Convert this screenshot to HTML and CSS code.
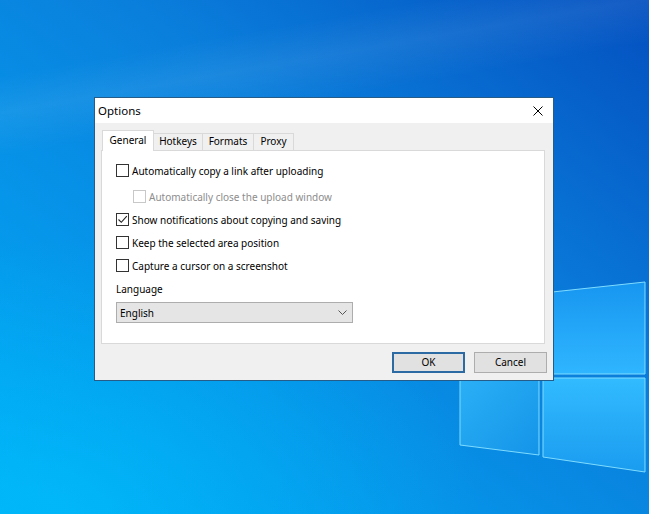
FILE: index.html
```html
<!DOCTYPE html>
<html>
<head>
  <title>Options</title>
  <meta charset="utf-8">
  <link rel="stylesheet" href="styles.css">
</head>
<body>
  <div class="desktop">
    <svg class="wallpaper" width="649" height="514" viewBox="0 0 649 514">
      <defs>
        <linearGradient id="pane-top" x1="0" y1="0" x2="0" y2="1">
          <stop offset="0" stop-color="#1796f0"/>
          <stop offset="1" stop-color="#2fb6ff"/>
        </linearGradient>
        <linearGradient id="pane-bl" x1="0" y1="0" x2="1" y2="1">
          <stop offset="0" stop-color="#2bb0f6"/>
          <stop offset="1" stop-color="#1494e8"/>
        </linearGradient>
        <linearGradient id="pane-br" x1="0" y1="0" x2="0" y2="1">
          <stop offset="0" stop-color="#32bbff"/>
          <stop offset="1" stop-color="#1a9cef"/>
        </linearGradient>
      </defs>
      <!-- windows logo panes -->
      <polygon points="460,305 539,294 539,374 460,374" fill="url(#pane-top)" stroke="#7edcff" stroke-width="1"/>
      <polygon points="543,293 645,282 645,374 543,374" fill="url(#pane-top)" stroke="#7edcff" stroke-width="1"/>
      <polygon points="460,378 539,378 539,455 460,445" fill="url(#pane-bl)" stroke="#7edcff" stroke-width="1"/>
      <polygon points="543,378 645,378 645,472 543,457" fill="url(#pane-br)" stroke="#7edcff" stroke-width="1"/>
    </svg>

    <div class="window">
      <div class="titlebar">
        <span class="title">Options</span>
        <svg class="close" width="10" height="10" viewBox="0 0 10 10">
          <path d="M0.5 0.5 L9.5 9.5 M9.5 0.5 L0.5 9.5" stroke="#000" stroke-width="1" fill="none"/>
        </svg>
      </div>

      <div class="window-body">
        <div class="tabs">
          <div class="tab tab-general active">General</div>
          <div class="tab tab-hotkeys">Hotkeys</div>
          <div class="tab tab-formats">Formats</div>
          <div class="tab tab-proxy">Proxy</div>
        </div>

        <div class="tab-panel">
          <div class="option">
            <span class="box"></span>
            <span>Automatically copy a link after uploading</span>
          </div>
          <div class="option sub disabled">
            <span class="box"></span>
            <span>Automatically close the upload window</span>
          </div>
          <div class="option">
            <span class="box">
              <svg width="11" height="11" viewBox="0 0 11 11">
                <path d="M1.5 5.5 L4.3 8.3 L9.8 2.2" stroke="#222" stroke-width="1.1" fill="none"/>
              </svg>
            </span>
            <span>Show notifications about copying and saving</span>
          </div>
          <div class="option">
            <span class="box"></span>
            <span>Keep the selected area position</span>
          </div>
          <div class="option">
            <span class="box"></span>
            <span>Capture a cursor on a screenshot</span>
          </div>

          <div class="field-label">Language</div>
          <div class="combo">
            <span>English</span>
            <svg width="9" height="5" viewBox="0 0 9 5">
              <path d="M0.5 0.5 L4.5 4.5 L8.5 0.5" stroke="#555" stroke-width="1" fill="none"/>
            </svg>
          </div>
        </div>

        <div class="buttons">
          <div class="btn default">OK</div>
          <div class="btn">Cancel</div>
        </div>
      </div>
    </div>
  </div>
</body>
</html>
```

FILE: styles.css
```css
body {
  margin: 0;
  font-family: 'Noto Sans', 'Segoe UI', sans-serif;
  font-size: 10px;
  color: #000;
  overflow: hidden;
}

.desktop {
  position: relative;
  width: 649px;
  height: 514px;
  box-sizing: border-box;
  padding: 97px 0 0 94px;
  background:
    linear-gradient(170deg, transparent 12%, rgba(255, 255, 255, 0.07) 18%, transparent 25%),
    radial-gradient(ellipse 420px 260px at 60px 500px, rgba(0, 200, 255, 0.45), transparent),
    linear-gradient(to bottom left, #0450c0 0%, #0a7fdc 40%, #0596ea 70%, #00acf6 100%);
}

.wallpaper {
  position: absolute;
  left: 0;
  top: 0;
}

.window {
  position: relative;
  width: 460px;
  border: 1px solid #265c88;
  box-sizing: border-box;
  background: #f0f0f0;
}

.titlebar {
  display: flex;
  align-items: center;
  justify-content: space-between;
  height: 25px;
  padding: 0 10px 0 3px;
  background: #fff;
}

.title {
  font-size: 11.5px;
}

.close {
  display: block;
}

.window-body {
  padding: 7px 6px;
}

.tabs {
  display: flex;
  align-items: flex-end;
  height: 20px;
  padding-left: 1px;
}

.tab {
  box-sizing: border-box;
  height: 17px;
  line-height: 15px;
  text-align: center;
  border: 1px solid #d9d9d9;
  border-bottom: none;
  background: #f0f0f0;
  margin-left: -1px;
}

.tab:first-child {
  margin-left: 0;
}

.tab.active {
  position: relative;
  z-index: 1;
  height: 21px;
  line-height: 18px;
  margin-bottom: -1px;
  background: #fff;
}

.tab-general { width: 52px; }
.tab-hotkeys { width: 50px; }
.tab-formats { width: 52px; }
.tab-proxy { width: 41px; }

.tab-panel {
  box-sizing: border-box;
  width: 444px;
  height: 194px;
  padding: 8px 14px 0;
  border: 1px solid #d9d9d9;
  background: #fff;
}

.option {
  display: flex;
  align-items: center;
  gap: 3px;
  height: 23px;
}

.option.sub {
  margin-top: 3px;
  padding-left: 17px;
}

.box {
  display: flex;
  align-items: center;
  justify-content: center;
  box-sizing: border-box;
  width: 13px;
  height: 13px;
  border: 1px solid #333;
  background: #fff;
}

.disabled {
  color: #8d8d8d;
}

.disabled .box {
  border-color: #c8c8c8;
}

.field-label {
  height: 16px;
  line-height: 16px;
  margin-top: 4px;
}

.combo {
  display: flex;
  align-items: center;
  justify-content: space-between;
  box-sizing: border-box;
  width: 237px;
  height: 21px;
  margin-top: 5px;
  padding: 0 5px 0 3px;
  border: 1px solid #adadad;
  background: #e5e5e5;
}

.buttons {
  display: flex;
  justify-content: flex-end;
  gap: 9px;
  margin-top: 8px;
}

.btn {
  box-sizing: border-box;
  width: 73px;
  height: 21px;
  line-height: 19px;
  text-align: center;
  border: 1px solid #adadad;
  background: #e1e1e1;
}

.btn.default {
  border: 2px solid #2b6aa3;
  line-height: 17px;
}
```
